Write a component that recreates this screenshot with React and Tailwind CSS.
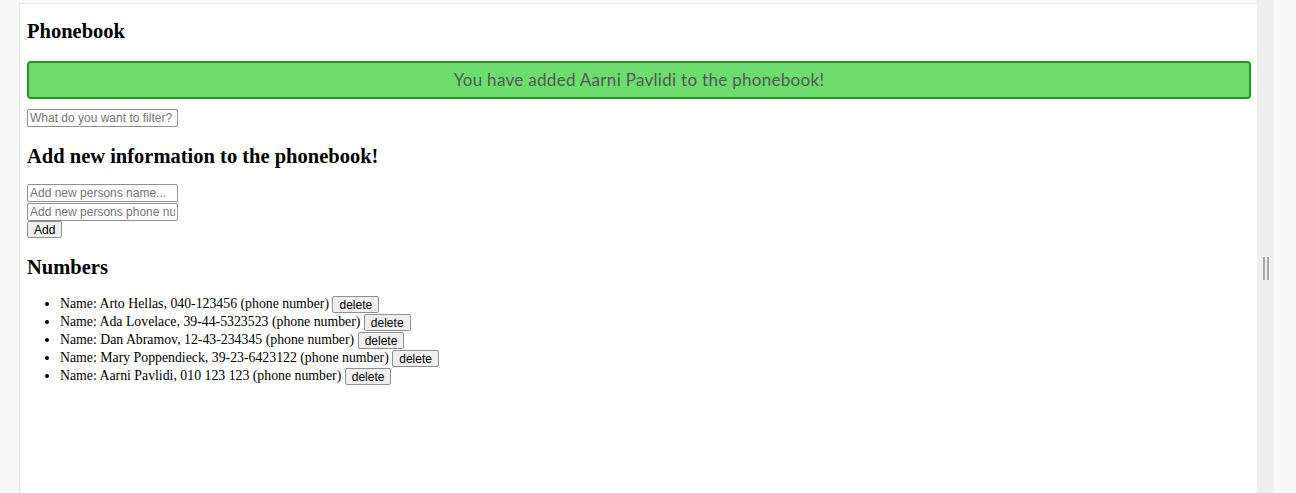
import React from 'react';

const persons = [
  { name: 'Arto Hellas', number: '040-123456' },
  { name: 'Ada Lovelace', number: '39-44-5323523' },
  { name: 'Dan Abramov', number: '12-43-234345' },
  { name: 'Mary Poppendieck', number: '39-23-6423122' },
  { name: 'Aarni Pavlidi', number: '010 123 123' },
];

const inputCls =
  "block w-[151px] h-[18px] border border-[#8f8f8f] rounded-[2px] px-[2px] text-[12px] leading-[16px] font-['Liberation_Sans',Arial,sans-serif] placeholder:text-[#757575] bg-white";

const btnCls =
  "h-[17px] border border-[#8f8f8f] rounded-[2px] bg-[#efefef] px-[6px] text-[12px] leading-[14px] text-black font-['Liberation_Sans',Arial,sans-serif]";

export default function App() {
  return (
    <div className="flex h-[493px] w-[1296px] overflow-hidden bg-[#f9f9f9] font-['Liberation_Serif','Times_New_Roman',serif] text-black">
      <div className="w-[19px] shrink-0 bg-[#f6f6f6]" />
      <div className="mt-[3px] w-[1238px] shrink-0 border-l border-t border-[#e6e6e6] bg-white pl-[7px] pr-[6px]">
        <h2 className="mt-[15px] text-[20.5px] font-bold leading-[24px]">Phonebook</h2>
        <div className="mt-[18px] flex h-[38px] items-center justify-center rounded-[4px] border-2 border-[#269626] bg-[#6fdc6f] font-['Lato','Open_Sans',sans-serif] text-[17px] tracking-[0.3px] text-[#4f5a4f]">
          You have added Aarni Pavlidi to the phonebook!
        </div>
        <input className={`${inputCls} mt-[10px]`} placeholder="What do you want to filter?" />
        <h3 className="mt-[17px] text-[20.5px] font-bold leading-[24px]">Add new information to the phonebook!</h3>
        <form className="mt-[16px]" onSubmit={(e) => e.preventDefault()}>
          <input className={inputCls} placeholder="Add new persons name..." />
          <input className={`${inputCls} mt-px`} placeholder="Add new persons phone number..." />
          <button type="submit" className={`${btnCls} block`}>Add</button>
        </form>
        <h3 className="mt-[17px] text-[20.5px] font-bold leading-[24px]">Numbers</h3>
        <ul className="mt-[16px] list-disc pl-[33px] text-[13.8px] leading-[18px]">
          {persons.map((p) => (
            <li key={p.name} className="h-[18px]">
              Name: {p.name}, {p.number} (phone number){' '}
              <button className={`${btnCls} align-middle`}>delete</button>
            </li>
          ))}
        </ul>
      </div>
      <div className="w-[17px] shrink-0 bg-[#efefef] pt-[257px]">
        <div className="mx-auto flex h-[23px] w-[6px] gap-[2px]">
          <div className="w-[2px] bg-[#a8a8a8]" />
          <div className="w-[2px] bg-[#a8a8a8]" />
        </div>
      </div>
    </div>
  );
}
